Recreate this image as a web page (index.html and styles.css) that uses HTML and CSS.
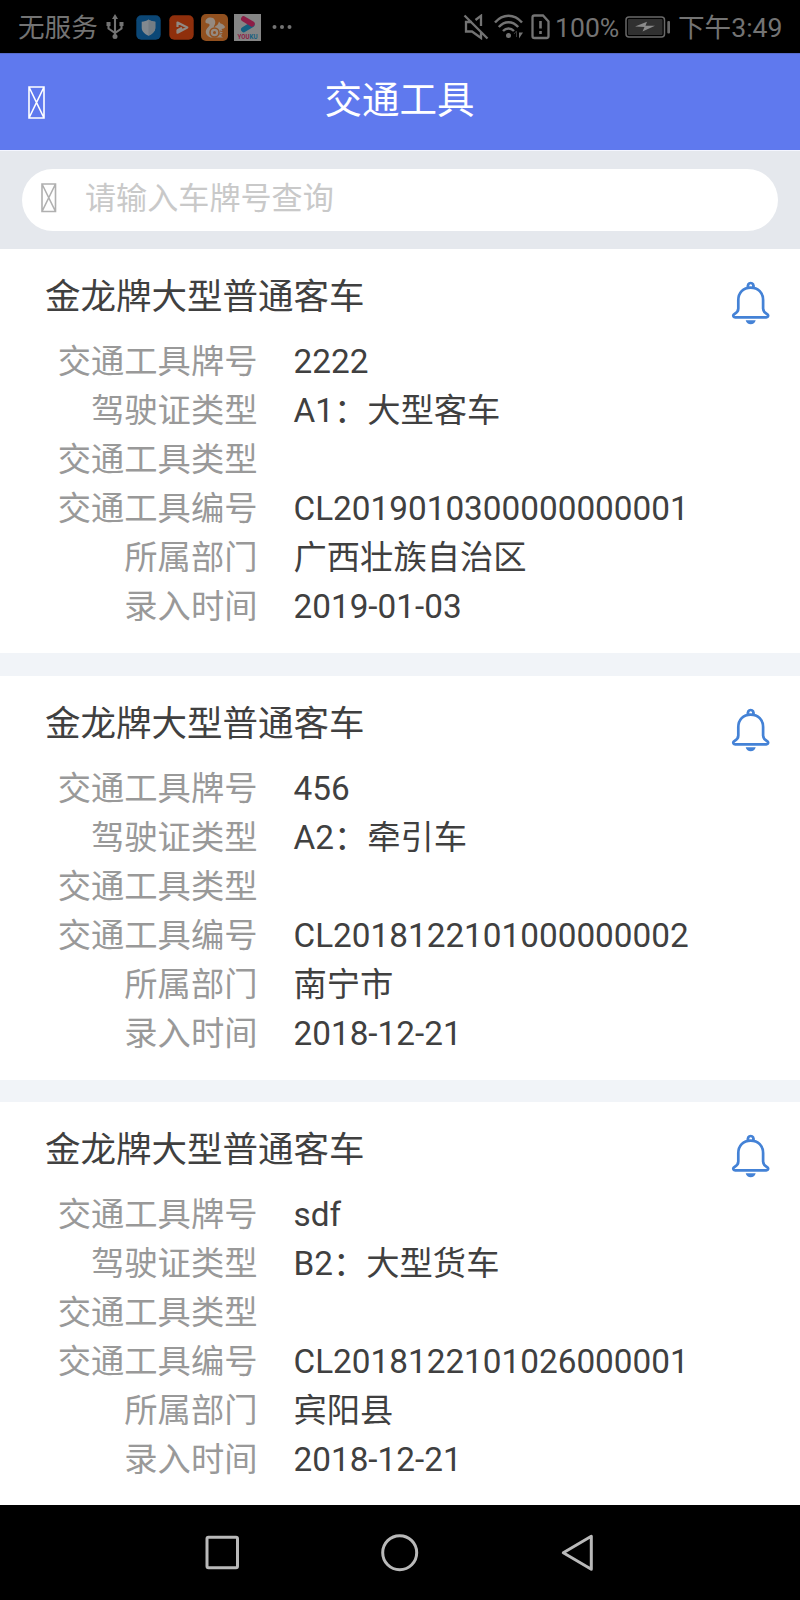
FILE: index.html
```html
<!DOCTYPE html>
<html lang="zh-CN">
<head>
<meta charset="utf-8">
<title>交通工具</title>
<link rel="stylesheet" href="styles.css">
</head>
<body>
<svg class="defs" width="0" height="0" aria-hidden="true">
  <symbol id="bell" viewBox="0 0 40 44">
    <g fill="none" stroke="#4482d6" stroke-width="2.700" stroke-linejoin="round">
      <path d="M17.200 6.600c-.9-2.900.5-4.600 2.500-4.600s3.400 1.700 2.500 4.600"/>
      <path d="M19.700 6.600c-7.600 0-12.400 5.200-12.400 12.500v8.500c0 2.600-1 4-3.800 5.400-2 1-1.500 3.400.6 3.400h31.200c2.100 0 2.600-2.400.6-3.400-2.800-1.400-3.800-2.800-3.800-5.400v-8.500c0-7.300-4.800-12.500-12.400-12.500z"/>
    </g>
    <path d="M14.700 39.300h10c-.6 2.600-2.600 4-5 4s-4.400-1.400-5-4z" fill="#4482d6"/>
  </symbol>
</svg>

<div class="status">
  <span class="carrier">无服务</span>
  <svg class="usb" width="18" height="26" viewBox="0 0 18 26" fill="none" stroke="#737373" stroke-width="2.100">
    <path d="M9 4v17M2.500 10v4.500l6.500 4.500 6.500-4.500V10"/>
    <path d="M9 0l3 5H6zM0.500 8h4v4h-4zM13.500 8h4v4h-4z" fill="#737373" stroke="none"/>
    <circle cx="9" cy="22.500" r="2.500" fill="#737373" stroke="none"/>
  </svg>
  <svg class="app" width="25" height="25" viewBox="0 0 25 25">
    <rect x=".3" y=".3" width="24.400" height="24.400" rx="5" fill="#0b4776"/>
    <path d="M12.500 4.500c2 1.400 4.200 2 6.800 2.200v5.800c0 3.900-2.600 6.300-6.800 8.300-4.200-2-6.800-4.400-6.800-8.300V6.700c2.600-.2 4.800-.8 6.800-2.200z" fill="#82898f"/>
    <path d="M12.500 4.500c2 1.400 4.200 2 6.800 2.200v5.800c0 3.900-2.600 6.300-6.800 8.300z" fill="#747d84"/>
  </svg>
  <svg class="app app-video" width="25" height="25" viewBox="0 0 25 25">
    <rect x=".3" y=".3" width="24.400" height="24.400" rx="5" fill="#8f2f0c"/>
    <path d="M8.500 12V7.500L18.300 12.500 8.500 17.700v-2.500l4.500-2.400" fill="none" stroke="#8f8984" stroke-width="2.200" stroke-linejoin="round"/>
  </svg>
  <svg class="app app-uc" width="27" height="27" viewBox="0 0 27 27">
    <rect width="27" height="27" rx="5" fill="#91501f"/>
    <path d="M9.500 23.500C5 21.500 3.500 18 6 14.500c1.500-2 3-2.500 2.500-4C8 9.200 5.500 10 4.500 8.500 4 5.500 6.500 3.500 9.500 3.500c4 0 5.500 3.500 4.500 6.500-.5 1.500-1.500 2.300-1 3.500 1.500-1.500 3-2 4-3.500l1-2.500 1.500 2c2.500.5 4 2 4.500 3.500-.5 1.500-2 1.800-3.500 2 1.500 2.500 1.500 5-.5 7l2 1.500z" fill="#958a80"/>
    <circle cx="13.500" cy="18.500" r="4.500" fill="none" stroke="#91501f" stroke-width="1.500"/>
    <circle cx="13.500" cy="18.500" r="1.500" fill="#91501f"/>
    <path d="M19 17l4 1M18.500 20l4-.5" stroke="#91501f" stroke-width="1"/>
  </svg>
  <svg class="app app-youku" width="27" height="27" viewBox="0 0 27 27">
    <rect width="27" height="27" fill="#858585"/>
    <path d="M9.800 15.500l8-4.800" stroke="#145f7f" stroke-width="5.500" stroke-linecap="round"/>
    <path d="M9.800 5l8.200 4.800" stroke="#8d1d46" stroke-width="5.500" stroke-linecap="round"/>
    <text x="3.500" y="24.700" class="youku-name" textLength="20" lengthAdjust="spacingAndGlyphs"><tspan fill="#8d1d46">YOU</tspan><tspan fill="#145f7f">KU</tspan></text>
  </svg>
  <svg class="more" width="20" height="6" viewBox="0 0 20 6" fill="#737373"><circle cx="2.500" cy="3" r="2"/><circle cx="10" cy="3" r="2"/><circle cx="17.500" cy="3" r="2"/></svg>

  <svg class="mute" width="26" height="26" viewBox="0 0 26 26" fill="none" stroke="#737373" stroke-width="2.300">
    <path d="M1.500 1.500l23 23M9 8H3v9.500h6l9 6.500v-6M12.500 6L18 1.800V12"/>
  </svg>
  <svg class="wifi" width="30" height="26" viewBox="0 0 30 26" fill="none" stroke="#737373" stroke-width="2.500">
    <path d="M1 8.500C9-.4 20-.4 28 8.500M4.800 13c5.800-6.300 13.600-6.300 19.400 0M9 17c3.300-3.400 7.700-3.400 11 0"/>
    <circle cx="14.500" cy="21.500" r="2.500" fill="#737373" stroke="none"/>
    <path d="M20 20l2.500-3v6" stroke="#3a3a3a" stroke-width="1"/><path d="M25 18.500h4l-4 6z" fill="#737373" stroke="none"/>
  </svg>
  <svg class="sim" width="19" height="26" viewBox="0 0 19 26" fill="none" stroke="#737373" stroke-width="2.300">
    <path d="M3.500 1.500h8.500l5.500 6V22c0 1.500-.5 2-2 2h-12c-1.500 0-2-.5-2-2V3.500c0-1.500.5-2 2-2z"/>
    <path d="M9.500 7v7.500M9.500 17v3" stroke-width="2.600"/>
  </svg>
  <span class="percent">100%</span>
  <svg class="battery" width="46" height="22" viewBox="0 0 46 22">
    <rect x="1" y="1" width="38.500" height="20" rx="3" fill="none" stroke="#686868" stroke-width="1.500"/>
    <rect x="3" y="3" width="34.500" height="16" rx="1" fill="#303030"/>
    <path d="M10 10.500l12-4.700-1.500 4H30l-12.500 5.700 2-4.500z" fill="#8a8a8a"/>
    <rect x="42.300" y="5" width="2.700" height="12.500" rx="1" fill="#686868"/>
  </svg>
  <span class="clock">下午3:49</span>
</div>

<header class="header">
  <svg class="back" width="17" height="33" viewBox="0 0 17 33" fill="none" stroke="#fff" stroke-width="1.600"><path d="M1 1h15v31H1zM1 1l15 31M16 1L1 32"/></svg>
  <h1 class="heading">交通工具</h1>
</header>

<div class="search">
  <div class="search-box">
    <svg width="16" height="30" viewBox="0 0 16 30" fill="none" stroke="#b0b0b0" stroke-width="1.600"><path d="M1 1h13.500v27.500H1zM1 1l13.500 27.500M14.500 1L1 28.500"/></svg>
    <span class="placeholder">请输入车牌号查询</span>
  </div>
</div>

<main class="list">
  <section class="card">
    <div class="card-head"><h2 class="name">金龙牌大型普通客车</h2><svg class="bell" width="40" height="44"><use href="#bell"/></svg></div>
    <dl class="fields">
      <dt>交通工具牌号</dt><dd>2222</dd>
      <dt>驾驶证类型</dt><dd>A1：大型客车</dd>
      <dt>交通工具类型</dt><dd></dd>
      <dt>交通工具编号</dt><dd>CL2019010300000000001</dd>
      <dt>所属部门</dt><dd>广西壮族自治区</dd>
      <dt>录入时间</dt><dd>2019-01-03</dd>
    </dl>
  </section>
  <section class="card">
    <div class="card-head"><h2 class="name">金龙牌大型普通客车</h2><svg class="bell" width="40" height="44"><use href="#bell"/></svg></div>
    <dl class="fields">
      <dt>交通工具牌号</dt><dd>456</dd>
      <dt>驾驶证类型</dt><dd>A2：牵引车</dd>
      <dt>交通工具类型</dt><dd></dd>
      <dt>交通工具编号</dt><dd>CL2018122101000000002</dd>
      <dt>所属部门</dt><dd>南宁市</dd>
      <dt>录入时间</dt><dd>2018-12-21</dd>
    </dl>
  </section>
  <section class="card">
    <div class="card-head"><h2 class="name">金龙牌大型普通客车</h2><svg class="bell" width="40" height="44"><use href="#bell"/></svg></div>
    <dl class="fields">
      <dt>交通工具牌号</dt><dd>sdf</dd>
      <dt>驾驶证类型</dt><dd>B2：大型货车</dd>
      <dt>交通工具类型</dt><dd></dd>
      <dt>交通工具编号</dt><dd>CL2018122101026000001</dd>
      <dt>所属部门</dt><dd>宾阳县</dd>
      <dt>录入时间</dt><dd>2018-12-21</dd>
    </dl>
  </section>
</main>

<nav class="nav">
  <svg width="36" height="40" viewBox="0 0 36 40"><rect x="3" y="4.300" width="30.500" height="30.500" rx="1.500"/></svg>
  <svg width="40" height="40" viewBox="0 0 40 40"><circle cx="19.700" cy="19.700" r="17"/></svg>
  <svg width="36" height="40" viewBox="0 0 36 40"><path d="M31.300 3.300v33L3.300 19.800z"/></svg>
</nav>
</body>
</html>
```
FILE: styles.css
```css
* {
  box-sizing: border-box;
}

body {
  display: flex;
  flex-direction: column;
  width: 800px;
  height: 1600px;
  margin: 0;
  overflow: hidden;
  background: #f1f4f8;
  color: #404040;
  font-family: Roboto, "Noto Sans CJK SC", sans-serif;
}

svg {
  display: block;
  flex: none;
}

.defs {
  position: absolute;
}

.status {
  display: flex;
  flex: none;
  align-items: center;
  height: 53px;
  padding-left: 18px;
  background: #000;
  color: #737373;
  font-size: 26.6px;
  line-height: 53px;
  white-space: nowrap;
}

.carrier,
.percent,
.clock {
  padding-top: 1px;
}

.carrier {
  width: 80px;
}

.usb {
  margin-left: 8px;
}

.app {
  margin-top: 1px;
  margin-left: 12px;
}

.app.app-video {
  margin-left: 8px;
}

.app.app-uc {
  margin-left: 7px;
}

.app.app-youku {
  margin-left: 6px;
}

.youku-name {
  font-family: Roboto, sans-serif;
  font-size: 6.5px;
  font-weight: 700;
}

.more {
  margin-left: 11px;
}

.mute {
  margin-left: auto;
}

.wifi {
  margin-left: 5px;
}

.sim {
  margin-left: 7px;
}

.percent {
  width: 64px;
  margin-left: 5px;
}

.battery {
  margin-left: 6px;
}

.clock {
  width: 122px;
  margin-left: 7px;
}

.header {
  display: grid;
  flex: none;
  grid-template-columns: 28px 17px 1fr 46px;
  align-items: center;
  height: 97px;
  border-top: 1px solid #566bcb;
  background: #5f79ee;
  color: #fff;
}

.back {
  grid-column: 2;
}

.heading {
  margin: 0;
  padding-bottom: 4px;
  font-size: 37.5px;
  font-weight: 400;
  line-height: 50px;
  text-align: center;
}

.search {
  flex: none;
  height: 99px;
  padding: 18px 22px;
  border-top: 1px solid #f4f6ff;
  background: #e5e8ed;
}

.search-box {
  display: flex;
  align-items: center;
  height: 62px;
  padding: 0 18px 5px 19px;
  border-radius: 31px;
  background: #fff;
}

.placeholder {
  padding-top: 2px;
  margin-left: 28px;
  color: #c9c9c9;
  font-size: 31.1px;
  line-height: 50px;
}

.list {
  display: flex;
  flex: 1;
  flex-direction: column;
  gap: 22.3px;
  min-height: 0;
  overflow: hidden;
}

.card {
  flex: none;
  height: 404.3px;
  background: #fff;
}

.card-head {
  display: flex;
  justify-content: space-between;
  height: 88px;
  padding: 21px 29px 0 45px;
}

.name {
  margin: 0;
  font-size: 35.5px;
  font-weight: 400;
  line-height: 54px;
}

.bell {
  margin-top: 11px;
}

.fields {
  display: grid;
  grid-template-columns: 257.5px 1fr;
  grid-auto-rows: 49px;
  column-gap: 36px;
  margin: 0;
  font-size: 33.3px;
  line-height: 49px;
  white-space: nowrap;
}

.fields dt {
  color: #999;
  text-align: right;
}

.fields dd {
  margin: 0;
}

.nav {
  display: flex;
  flex: none;
  align-items: center;
  justify-content: space-between;
  height: 95px;
  padding: 0 204px;
  background: #000;
}

.nav svg {
  fill: none;
  stroke: #b9b9b9;
  stroke-width: 3;
  stroke-linejoin: round;
}
```
